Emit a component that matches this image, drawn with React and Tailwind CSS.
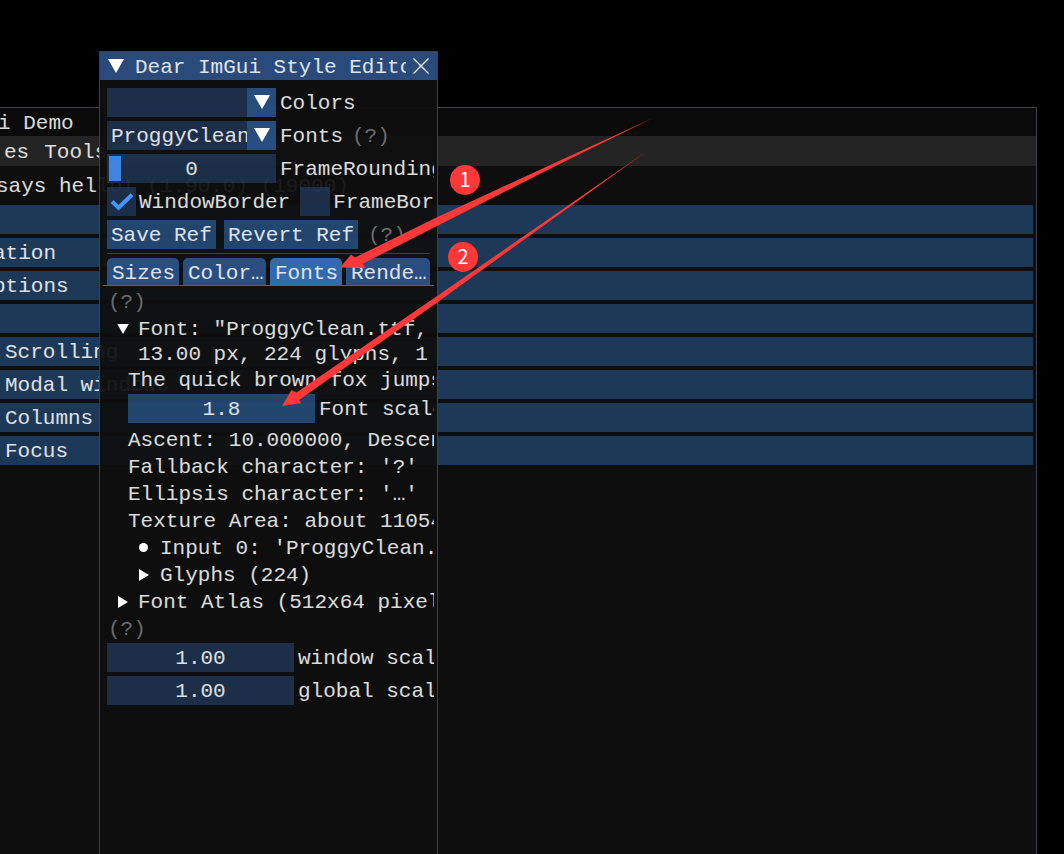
import React from "react";

const MONO = "font-['Liberation_Mono',monospace] text-[21px] leading-[27px] whitespace-pre text-white/85";

function Down({ className = "" }) {
  return (
    <svg className={"shrink-0 " + className} viewBox="0 0 16 14" fill="#fff">
      <path d="M0 0H16L8 14Z" />
    </svg>
  );
}

function Right({ className = "" }) {
  return (
    <svg className={"h-3 w-2.5 shrink-0 " + className} viewBox="0 0 10 12" fill="#fff">
      <path d="M0 0L10 6L0 12Z" />
    </svg>
  );
}

function Help({ className = "" }) {
  return <span className={"text-[#6c6c6c] " + className}>(?)</span>;
}

function Combo({ value }) {
  return (
    <div className="flex h-[29px] w-[169px] shrink-0 bg-[#294a7a]/54">
      <div className="w-[140px] overflow-hidden pl-1 pt-0.5">{value}</div>
      <div className="flex w-[29px] items-center justify-center bg-[#4296fa]/30 pb-0.5">
        <Down className="h-3.5 w-4" />
      </div>
    </div>
  );
}

function Scalar({ value, label, className }) {
  return (
    <div className="mb-1 flex h-[29px] items-center">
      <div className={"flex h-[29px] w-[187px] shrink-0 items-center justify-center pt-0.5 " + className}>{value}</div>
      <span className="pl-1 pt-0.5">{label}</span>
    </div>
  );
}

function Line({ className = "", children }) {
  return <div className={"flex h-[27px] items-center " + className}>{children}</div>;
}

function Tab({ label, className }) {
  return <div className={"h-[27px] shrink-0 rounded-t-[5px] pl-[5px] pt-0.5 " + className}>{label}</div>;
}

const HEADERS = [
  ["", ""],
  ["ation", "-ml-[7px]"],
  ["ptions", "-ml-[7px]"],
  ["", ""],
  ["Scrolling", "ml-[5px]"],
  ["Modal windows", "ml-[5px]"],
  ["Columns", "ml-[5px]"],
  ["Focus", "ml-[5px]"],
];

function DemoWindow() {
  return (
    <div className="absolute top-[107px] left-0 h-[747px] w-[1037px] overflow-hidden border-t border-r border-[#3f3f48] bg-[#0e0e0e]">
      <div className="h-7 bg-[#0a0a0a] pt-0.5">
        <span className="-ml-[2px]">i Demo</span>
      </div>
      <div className="flex h-[30px] gap-[15px] bg-[#242424] pl-1 pt-[3px]">
        <span>es</span>
        <span>Tools</span>
      </div>
      <div className="h-[39px] pt-[7px]">
        <span className="-ml-1">says hello! (1.90.0) (19000)</span>
      </div>
      <div className="flex w-[1033px] flex-col gap-1">
        {HEADERS.map(([label, offset], i) => (
          <div key={i} className="h-[29px] bg-[#1e3957] pt-0.5">
            <span className={offset}>{label}</span>
          </div>
        ))}
      </div>
    </div>
  );
}

function StyleEditor() {
  return (
    <div className="absolute top-[51px] left-[99px] h-[810px] w-[339px] border border-[#3f3f48] bg-[#0f0f0f]/94">
      <div className="flex h-7 items-center bg-[#294a7a] pl-2">
        <Down className="h-3.5 w-4" />
        <div className="ml-[11px] w-[271px] overflow-hidden pt-0.5">Dear ImGui Style Editor</div>
        <svg className="ml-[7px] h-4 w-4 shrink-0" viewBox="0 0 16 16" stroke="#fff" strokeWidth="1.2">
          <path d="M0.5 0.5L15.5 15.5M15.5 0.5L0.5 15.5" />
        </svg>
      </div>
      <div className="w-[334px] overflow-hidden pt-2">
        <div className="flex flex-col gap-1 pl-[7px]">
          <div className="flex h-[29px]">
            <Combo value="" />
            <span className="pl-1 pt-0.5">Colors</span>
          </div>
          <div className="flex h-[29px]">
            <Combo value="ProggyClean.ttf" />
            <span className="pl-1 pt-0.5">Fonts</span>
            <Help className="pl-[9px] pt-0.5" />
          </div>
          <div className="flex h-[29px]">
            <div className="flex w-[169px] shrink-0 items-center bg-[#294a7a]/54 pl-0.5">
              <div className="h-[25px] w-3 bg-[#3d85e0]" />
              <div className="w-[141px] pt-0.5 text-center">0</div>
            </div>
            <span className="pl-1 pt-0.5">FrameRounding</span>
          </div>
          <div className="flex h-[29px]">
            <div className="flex w-[29px] shrink-0 items-center justify-center bg-[#294a7a]/54">
              <svg className="h-[18px] w-6 shrink-0" viewBox="0 0 24 18" fill="none" stroke="#4296fa" strokeWidth="4">
                <path d="M2 8.5L8.6 14.8L22 1.8" />
              </svg>
            </div>
            <span className="pl-[3px] pt-0.5">WindowBorder</span>
            <div className="ml-[10px] w-[30px] shrink-0 bg-[#294a7a]/54" />
            <span className="pl-[3px] pt-0.5">FrameBorder</span>
          </div>
          <div className="flex h-[29px]">
            <div className="w-[109px] bg-[#4296fa]/40 pl-1 pt-0.5">Save Ref</div>
            <div className="ml-2 w-[134px] bg-[#4296fa]/40 pl-1 pt-0.5">Revert Ref</div>
            <Help className="pl-2.5 pt-0.5" />
          </div>
        </div>
        <div className="mt-1 ml-[7px] h-px w-[323px] bg-[#3f3f48]" />
        <div className="mt-1 flex gap-1 pl-[7px]">
          <Tab label="Sizes" className="w-[72px] bg-[#2e5994]/86" />
          <Tab label="Color…" className="w-[83px] bg-[#2e5994]/86" />
          <Tab label="Fonts" className="w-[72px] bg-[#3369ad]" />
          <Tab label="Rende…" className="w-[84px] bg-[#2e5994]/86" />
        </div>
        <div className="mb-[3px] ml-[3px] h-px bg-[#3369ad]" />
        <Line className="pl-2">
          <Help />
        </Line>
        <Line className="pl-[17px]">
          <Down className="mb-0.5 h-2.5 w-3" />
          <span className="pl-[9px]">{'Font: "ProggyClean.ttf, 13px"'}</span>
        </Line>
        <div className="h-6 pl-[38px] leading-6">13.00 px, 224 glyphs, 1 file(s)</div>
        <Line className="pl-7">The quick brown fox jumps</Line>
        <div className="pl-7">
          <Scalar value="1.8" label="Font scale" className="bg-[#4296fa]/40" />
        </div>
        <Line className="pl-7">Ascent: 10.000000, Descent</Line>
        <Line className="pl-7">Fallback character: '?'</Line>
        <Line className="pl-7">Ellipsis character: '…'</Line>
        <Line className="pl-7">Texture Area: about 11054 px</Line>
        <Line className="pl-[39px]">
          <div className="mb-0.5 h-[9px] w-[9px] shrink-0 rounded-full bg-white" />
          <span className="pl-3">Input 0: 'ProggyClean.ttf</span>
        </Line>
        <Line className="pl-[39px]">
          <Right className="mb-0.5" />
          <span className="pl-[11px]">Glyphs (224)</span>
        </Line>
        <Line className="pl-[18px]">
          <Right className="mb-0.5" />
          <span className="pl-2.5">Font Atlas (512x64 pixels)</span>
        </Line>
        <Line className="pl-2">
          <Help />
        </Line>
        <div className="pl-[7px]">
          <Scalar value="1.00" label="window scale" className="bg-[#294a7a]/54" />
          <Scalar value="1.00" label="global scale" className="bg-[#294a7a]/54" />
        </div>
      </div>
    </div>
  );
}

function Badge({ n, className }) {
  return (
    <div
      className={
        "absolute flex h-[30px] w-[30px] items-center justify-center rounded-full bg-[#fd3838] pb-0.5 font-['Noto_Sans_CJK_SC',sans-serif] text-xl leading-none text-white " +
        className
      }
    >
      {n}
    </div>
  );
}

export default function App() {
  return (
    <div className={"relative h-[854px] w-[1064px] overflow-hidden bg-black " + MONO}>
      <DemoWindow />
      <StyleEditor />
      <svg className="absolute inset-0 h-[854px] w-[1064px]" viewBox="0 0 1064 854" fill="#fd3838">
        <path d="M340 267.5L351 254.5L355 257.5L437 217.2L553 163.8L653 118L553 167.2L437 226L362.7 263.7L366 268Z" />
        <path d="M282 406L291.5 390L296.5 392.5L440 294L465 276.8L647 151L465 282.3L440 300.5L299 400L301 403.3Z" />
      </svg>
      <Badge n="1" className="top-[165px] left-[450px]" />
      <Badge n="2" className="top-[242px] left-[448px]" />
    </div>
  );
}
